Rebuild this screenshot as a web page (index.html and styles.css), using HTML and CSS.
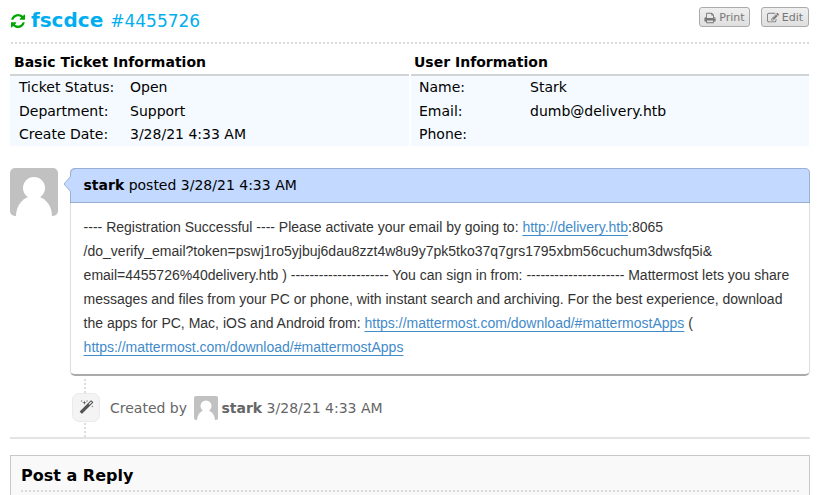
FILE: index.html
```
<!DOCTYPE html>
<html lang="en">
<head>
<meta charset="utf-8">
<title>Ticket #4455726</title>
<link rel="stylesheet" href="styles.css">
</head>
<body>
<header class="ticket-header">
  <h1><svg class="refresh" viewBox="0 0 1536 1536"><path d="M1511 928q0 5-1 7-64 268-268 434.500t-478 166.500q-146 0-282.500-55t-243.500-157l-129 129q-19 19-45 19t-45-19-19-45v-448q0-26 19-45t45-19h448q26 0 45 19t19 45-19 45l-137 137q71 66 161 102t187 36q134 0 250-65t186-179q11-17 53-117 8-23 30-23h192q13 0 22.500 9.500t9.500 22.500zm25-800v448q0 26-19 45t-45 19h-448q-26 0-45-19t-19-45 19-45l138-138q-148-137-349-137-134 0-250 65t-186 179q-11 17-53 117-8 23-30 23h-199q-13 0-22.500-9.500t-9.500-22.500v-7q65-268 270-434.500t480-166.500q146 0 284 55.500t245 156.500l130-129q19-19 45-19t45 19 19 45z"/></svg><b>fscdce</b><small>#4455726</small></h1>
  <div class="actions">
    <a class="button print"><svg viewBox="0 0 1792 1792"><path d="M448 1536h896v-256h-896v256zm0-640h896v-384h-160q-40 0-68-28t-28-68v-160h-640v640zm1152 64q0-26-19-45t-45-19-45 19-19 45 19 45 45 19 45-19 19-45zm128 0v416q0 13-9.500 22.500t-22.500 9.500h-224v160q0 40-28 68t-68 28h-960q-40 0-68-28t-28-68v-160h-224q-13 0-22.500-9.500t-9.500-22.500v-416q0-79 56.500-135.500t135.500-56.500h64v-544q0-40 28-68t68-28h672q40 0 88 20t76 48l152 152q28 28 48 76t20 88v256h64q79 0 135.500 56.500t56.500 135.500z"/></svg>Print</a>
    <a class="button edit"><svg viewBox="0 0 1792 1792"><path d="M888 1184l116-116-152-152-116 116v56h96v96h56zm440-720q-16-16-33 1l-350 350q-17 17-1 33t33-1l350-350q17-17 1-33zm80 594v190q0 119-84.500 203.500t-203.500 84.500h-832q-119 0-203.500-84.500t-84.500-203.500v-832q0-119 84.500-203.500t203.500-84.500h832q63 0 117 25 15 7 18 23 3 17-9 29l-49 49q-14 14-32 8-23-6-45-6h-832q-66 0-113 47t-47 113v832q0 66 47 113t113 47h832q66 0 113-47t47-113v-126q0-13 9-22l64-64q15-15 35-7t20 29zm-96-738l288 288-672 672h-288v-288zm444 132l-92 92-288-288 92-92q28-28 68-28t68 28l152 152q28 28 28 68t-28 68z"/></svg>Edit</a>
  </div>
</header>
<div class="dots header-dots"></div>
<div class="info">
  <section>
    <h2>Basic Ticket Information</h2>
    <dl>
      <dt>Ticket Status:</dt><dd>Open</dd>
      <dt>Department:</dt><dd>Support</dd>
      <dt>Create Date:</dt><dd>3/28/21 4:33 AM</dd>
    </dl>
  </section>
  <section>
    <h2>User Information</h2>
    <dl>
      <dt>Name:</dt><dd>Stark</dd>
      <dt>Email:</dt><dd>dumb@delivery.htb</dd>
      <dt>Phone:</dt><dd></dd>
    </dl>
  </section>
</div>
<article class="entry">
  <svg class="avatar" viewBox="0 0 48 48"><rect width="48" height="48" fill="#c1c1c1"/><circle cx="24" cy="20" r="11" fill="#fff"/><ellipse cx="24" cy="48" rx="18" ry="20" fill="#fff"/></svg>
  <div class="message">
    <div class="message-head"><svg class="arrow" viewBox="0 0 8 16"><path d="M8 0L1 8L8 16" fill="#c3d9ff" stroke="#98afd8"/></svg><b>stark</b> posted 3/28/21 4:33 AM</div>
    <div class="message-body">---- Registration Successful ---- Please activate your email by going to: <a>http://delivery.htb</a>:8065<br>/do_verify_email?token=pswj1ro5yjbuj6dau8zzt4w8u9y7pk5tko37q7grs1795xbm56cuchum3dwsfq5i&amp;<br>email=4455726%40delivery.htb ) --------------------- You can sign in from: --------------------- Mattermost lets you share<br>messages and files from your PC or phone, with instant search and archiving. For the best experience, download<br>the apps for PC, Mac, iOS and Android from: <a>https://mattermost.com/download/#mattermostApps</a> (<br><a>https://mattermost.com/download/#mattermostApps</a></div>
  </div>
</article>
<div class="event">
  <div class="event-rail"><span class="badge"><svg viewBox="0 0 1792 1792"><path d="M1254 581l293-293-107-107-293 293zm447-293q0 27-18 45l-1286 1286q-18 18-45 18t-45-18l-198-198q-18-18-18-45t18-45l1286-1286q18-18 45-18t45 18l198 198q18 18 18 45zm-1351-190l98 30-98 30-30 98-30-98-98-30 98-30 30-98zm350 162l196 60-196 60-60 196-60-196-196-60 196-60 60-196zm930 478l98 30-98 30-30 98-30-98-98-30 98-30 30-98zm-640-640l98 30-98 30-30 98-30-98-98-30 98-30 30-98z"/></svg></span></div>
  <div class="event-text">Created by <svg class="mini" viewBox="0 0 48 48"><rect width="48" height="48" fill="#c1c1c1"/><circle cx="24" cy="20" r="11" fill="#fff"/><ellipse cx="24" cy="48" rx="18" ry="20" fill="#fff"/></svg><b>stark</b> 3/28/21 4:33 AM</div>
</div>
<section class="reply"><h2>Post a Reply</h2><div class="dots"></div></section>
</body>
</html>
```
FILE: styles.css
```
* { box-sizing: border-box; }
html { overflow: hidden; }
body {
  margin: 0;
  padding: 0 8px 0 10px;
  height: 495px;
  overflow: hidden;
  background: #fff;
  color: #000;
  font: 14px/20px "DejaVu Sans", sans-serif;
}
h1, h2, dl, dd { margin: 0; }
.dots {
  height: 2px;
  background: repeating-linear-gradient(90deg, #dadada 0 2px, transparent 2px 4px);
}
.header-dots { margin: 0 1px; }
.ticket-header {
  display: flex;
  justify-content: space-between;
  height: 42px;
}
h1 {
  display: flex;
  align-items: baseline;
  padding-top: 8px;
  color: #00aeef;
  font-size: 20px;
  line-height: 24px;
}
h1 small {
  margin-left: 7px;
  font-size: 17px;
  font-weight: normal;
}
.refresh {
  width: 14px;
  height: 14px;
  margin: 0 6px 0 1px;
  align-self: flex-start;
  position: relative;
  top: 6px;
  fill: #00a600;
}
.actions {
  display: flex;
  gap: 11px;
  padding: 7px 1px 0 0;
}
.button {
  display: flex;
  align-items: center;
  justify-content: center;
  gap: 3px;
  height: 20px;
  border: 1px solid #aaa;
  border-radius: 3px;
  background: linear-gradient(#efefef, #dfdfdf);
  color: #777;
  font-size: 11px;
  line-height: 18px;
  padding-top: 1px;
}
.print { width: 51px; }
.edit { width: 48px; }
.button svg {
  width: 12px;
  height: 12px;
  fill: #777;
}
.info {
  display: grid;
  grid-template-columns: 399px 398px;
  gap: 2px;
  margin-top: 8px;
}
.info h2 {
  height: 24px;
  padding: 0 4px;
  border-bottom: 2px solid #d0d4d4;
  font-size: 14px;
}
.info section + section h2 { padding-left: 3px; }
.info dl {
  display: grid;
  grid-template-columns: 111px 1fr;
  grid-template-rows: 24px 23px 23px;
  padding-left: 9px;
  background: #f4faff;
  line-height: 23px;
}
.info section + section dl { padding-left: 8px; }
.entry {
  display: flex;
  gap: 12px;
  margin-top: 22px;
}
.avatar {
  width: 48px;
  height: 48px;
  border-radius: 5px;
}
.message {
  width: 740px;
  height: 208px;
  border: 1px solid #ddd;
  border-top: 0;
  border-bottom: 2px solid #aaa;
  border-radius: 5px;
}
.message-head {
  position: relative;
  height: 35px;
  margin: 0 -1px;
  padding-left: 13.5px;
  border: 1px solid #98afd8;
  border-left-width: 0;
  border-radius: 5px 5px 0 0;
  background: #c3d9ff;
  line-height: 33px;
  box-shadow: inset 1px 0 #98afd8;
}
.arrow {
  position: absolute;
  left: -7px;
  top: 7px;
  width: 8px;
  height: 16px;
}
.message-body {
  padding: 12px 12.6px;
  color: #333;
  font: 14px/24px "Liberation Sans", sans-serif;
  white-space: nowrap;
}
.message-body a {
  color: #428bca;
  text-decoration: underline;
  text-decoration-thickness: 1px;
  text-underline-offset: 3px;
}
.event {
  display: flex;
  height: 63px;
  border-bottom: 2px solid #e3e3e3;
  color: #666;
}
.event-rail {
  width: 28px;
  margin: 3px 10px 0 62px;
  padding-top: 14px;
  background: repeating-linear-gradient(#ddd 0 2px, transparent 2px 4px) 12px 0 / 2px 100% no-repeat;
}
.badge {
  display: flex;
  align-items: center;
  justify-content: center;
  width: 28px;
  height: 29px;
  border: 1px solid #eaeaea;
  border-radius: 7px;
  background: #f4f4f4;
}
.badge svg {
  width: 15px;
  height: 15px;
  fill: #555;
}
.event-text {
  display: flex;
  align-items: center;
  height: 24px;
  margin-top: 20px;
  white-space: pre;
}
.mini {
  width: 24px;
  height: 24px;
  margin: 0 3px;
  border-radius: 2px;
}
.reply {
  height: 50px;
  margin-top: 16px;
  padding: 10px 10px 0;
  border: 1px solid #c8c8c8;
  border-bottom: 0;
  background: #f9f9f9;
}
.reply h2 {
  height: 24px;
  font-size: 16px;
  line-height: 20px;
}
```
